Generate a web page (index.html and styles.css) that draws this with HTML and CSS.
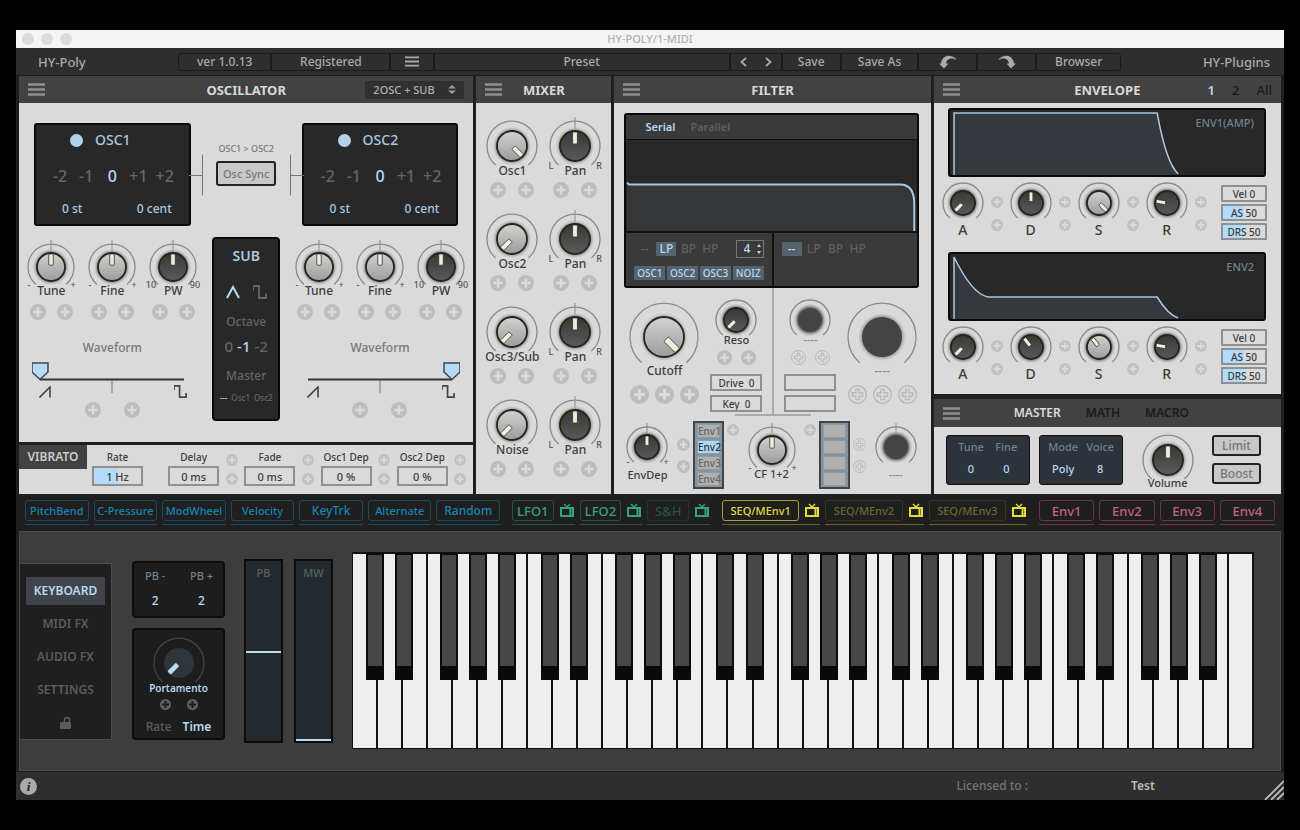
FILE: index.html
```html
<!DOCTYPE html>
<html lang="en">
<head>
    <meta charset="utf-8">
    <title>HY-POLY/1-MIDI</title>
    <link rel="stylesheet" href="styles.css">
</head>
<body>
    <!-- Shared icons -->
    <svg class="sprite" width="0" height="0" aria-hidden="true">
        <defs>
            <linearGradient id="lightKnob" x1="0" y1="0" x2="0" y2="1">
                <stop offset="0" stop-color="#d2d2d2"/><stop offset="1" stop-color="#9c9c9c"/>
            </linearGradient>
            <linearGradient id="darkKnob" x1="0" y1="0" x2="0" y2="1">
                <stop offset="0" stop-color="#383838"/><stop offset="1" stop-color="#5a5a5a"/>
            </linearGradient>
            <radialGradient id="knobShadow">
                <stop offset="0.75" stop-color="#777"/><stop offset="1" stop-color="#dadada" stop-opacity="0"/>
            </radialGradient>
        </defs>
        <symbol id="menu" viewBox="0 0 17 13"><path d="M0 1.5h17M0 6.5h17M0 11.5h17" stroke="currentColor" stroke-width="2.4"/></symbol>
        <symbol id="plus" viewBox="0 0 16 16"><circle cx="8" cy="8" r="8" fill="#bdbdbd"/><path d="M8 3.5v9M3.5 8h9" stroke="#dcdcdc" stroke-width="2.4"/></symbol>
        <symbol id="plus-off" viewBox="0 0 20 20"><circle cx="10" cy="10" r="9.3" fill="none" stroke="#b4b4b4" stroke-width="1.2"/><path d="M8.3 4.5h3.4v3.8h3.8v3.4h-3.8v3.8H8.3v-3.8H4.5V8.3h3.8z" fill="none" stroke="#b4b4b4" stroke-width="1.2"/></symbol>
        <symbol id="plus-dark" viewBox="0 0 16 16"><circle cx="8" cy="8" r="8" fill="#5c6166"/><path d="M8 3v10M3 8h10" stroke="#1d1d1d" stroke-width="3"/></symbol>
        <symbol id="tv" viewBox="0 0 16 15"><path d="M2 5h12v8H2z" fill="none" stroke="currentColor" stroke-width="2"/><path d="M11.5 5v8" stroke="currentColor" stroke-width="2"/><path d="M5 1l3 3 3-3" fill="none" stroke="currentColor" stroke-width="1.4"/></symbol>
        <symbol id="saw" viewBox="0 0 12 12"><path d="M.5 11.5L11 1v10.5" fill="none" stroke="currentColor" stroke-width="1.6"/></symbol>
        <symbol id="square" viewBox="0 0 14 14"><path d="M0 5.5V1h6v12h7V8.5" fill="none" stroke="currentColor" stroke-width="1.8"/></symbol>
    </svg>

    <main class="window">
        <div class="titlebar">
            <span class="dots"><i></i><i></i><i></i></span>
            <span class="window-title">HY-POLY/1-MIDI</span>
        </div>

        <header class="topbar">
            <span class="brand">HY-Poly</span>
            <div class="toolbar">
                <span class="tool version">ver 1.0.13</span>
                <button class="tool registered">Registered</button>
                <button class="tool menu-cell" aria-label="Menu"><svg width="14" height="11"><use href="#menu"/></svg></button>
                <button class="tool preset">Preset</button>
                <span class="tool arrows">
                    <button aria-label="Previous preset"><svg width="7" height="10" viewBox="0 0 7 10"><path d="M6 1L1.5 5 6 9" fill="none" stroke="currentColor" stroke-width="1.8"/></svg></button>
                    <button aria-label="Next preset"><svg width="7" height="10" viewBox="0 0 7 10"><path d="M1 1l4.500 4L1 9" fill="none" stroke="currentColor" stroke-width="1.8"/></svg></button>
                </span>
                <button class="tool save">Save</button>
                <button class="tool save-as">Save As</button>
                <button class="tool history" aria-label="Undo"><svg width="18" height="14" viewBox="0 0 18 14"><path d="M0 8.500h2C2.500 3 7 0 11 1c3.500.5 5.500 2 6.500 4C14 2.500 8 2.500 7 8.500h2.500L5 13.500z" fill="currentColor"/></svg></button>
                <button class="tool history" aria-label="Redo"><svg width="18" height="14" viewBox="0 0 18 14"><path d="M18 8.500h-2C15.500 3 11 0 7 1 3.500 1.500 1.500 3 .5 5 4 2.500 10 2.500 11 8.500H8.500l4.500 5z" fill="currentColor"/></svg></button>
                <button class="tool browser">Browser</button>
            </div>
            <span class="brand">HY-Plugins</span>
        </header>

        <div class="panels">
            <!-- Oscillator -->
            <section class="column">
                <div class="panel-header">
                    <button class="burger" aria-label="Oscillator menu"><svg width="17" height="13"><use href="#menu"/></svg></button>
                    <h2>OSCILLATOR</h2>
                    <span class="select-box">
                        <select aria-label="Oscillator mode"><option>2OSC + SUB</option></select>
                        <svg width="8" height="9" viewBox="0 0 8 9"><path d="M0 3.500L4 0l4 3.500zM0 5.500h8L4 9z" fill="#999"/></svg>
                    </span>
                </div>
                <div class="panel-body osc-body">
                    <div class="osc" data-osc="OSC1" data-pos="0"></div>
                    <div class="osc-middle">
                        <span class="sync-label">OSC1 &gt; OSC2</span>
                        <button class="sync">Osc Sync</button>
                        <div class="sub">
                            <strong>SUB</strong>
                            <div class="sub-waves">
                                <button class="lit" aria-label="Triangle"><svg width="14" height="14" viewBox="0 0 14 14"><path d="M1 13L7 2l6 11" fill="none" stroke="currentColor" stroke-width="2"/></svg></button>
                                <button aria-label="Square"><svg width="14" height="14"><use href="#square"/></svg></button>
                            </div>
                            <span>Octave</span>
                            <div class="sub-octave"><button>0</button><button class="lit">-1</button><button>-2</button></div>
                            <span>Master</span>
                            <div class="sub-master"><button class="lit">---</button><button>Osc1</button><button>Osc2</button></div>
                        </div>
                    </div>
                    <div class="osc right" data-osc="OSC2" data-pos="100"></div>
                </div>
                <div class="panel-body vibrato">
                    <h3>VIBRATO</h3>
                    <div class="vib-fields">
                        <div class="field"><label for="vRate">Rate</label><input id="vRate" class="half" value="1 Hz"></div>
                        <div class="field"><label for="vDelay">Delay</label><input id="vDelay" value="0 ms"></div>
                        <div class="slots stacked" data-count="2" data-size="12"></div>
                        <div class="field"><label for="vFade">Fade</label><input id="vFade" value="0 ms"></div>
                        <div class="slots stacked" data-count="2" data-size="12"></div>
                        <div class="field"><label for="vOsc1">Osc1 Dep</label><input id="vOsc1" value="0 %"></div>
                        <div class="slots stacked" data-count="2" data-size="12"></div>
                        <div class="field"><label for="vOsc2">Osc2 Dep</label><input id="vOsc2" value="0 %"></div>
                        <div class="slots stacked" data-count="2" data-size="12"></div>
                    </div>
                </div>
            </section>

            <!-- Mixer -->
            <section class="column">
                <div class="panel-header">
                    <button class="burger" aria-label="Mixer menu"><svg width="17" height="13"><use href="#menu"/></svg></button>
                    <h2>MIXER</h2>
                </div>
                <div class="panel-body mixer" id="mixer"></div>
            </section>

            <!-- Filter -->
            <section class="column">
                <div class="panel-header">
                    <button class="burger" aria-label="Filter menu"><svg width="17" height="13"><use href="#menu"/></svg></button>
                    <h2>FILTER</h2>
                </div>
                <div class="panel-body filter">
                    <div class="screen filter-screen">
                        <div class="routing"><button class="lit">Serial</button><button>Parallel</button></div>
                        <svg class="curve" height="94" viewBox="0 0 290 94" preserveAspectRatio="none">
                            <path d="M1 44l2 2H274Q288 46 288 66V94H1z" fill="#343638"/>
                            <path d="M1 44l2 2H274Q288 46 288 66V94" fill="none" stroke="#a9c8e2" stroke-width="2"/>
                        </svg>
                        <div class="filter-types">
                            <div class="types-half">
                                <div class="types">
                                    <button>--</button><button class="on">LP</button><button>BP</button><button>HP</button>
                                    <span class="poles">
                                        <select aria-label="Poles"><option>4</option></select>
                                        <svg width="4" height="10" viewBox="0 0 4 10"><path d="M0 3l2-3 2 3zM0 7h4l-2 3z" fill="#b8d9f2"/></svg>
                                    </span>
                                </div>
                                <div class="sources"><button class="on">OSC1</button><button class="on">OSC2</button><button class="on">OSC3</button><button class="on">NOIZ</button></div>
                            </div>
                            <div class="types-half">
                                <div class="types"><button class="on">--</button><button>LP</button><button>BP</button><button>HP</button></div>
                            </div>
                        </div>
                    </div>
                    <div class="filter-main">
                        <div class="cutoff">
                            <div class="knob" data-name="Cutoff" data-size="xl" data-value="100" data-tone="light"></div>
                            <div class="slots" data-count="3" data-size="19"></div>
                        </div>
                        <div class="reso">
                            <div class="knob" data-name="Reso" data-size="s" data-value="0" data-tone="dark"></div>
                            <div class="slots" data-count="2" data-size="15"></div>
                            <input class="box" aria-label="Drive" value="Drive  0">
                            <input class="box" aria-label="Key" value="Key  0">
                        </div>
                        <div class="stem"></div>
                        <div class="reso">
                            <div class="knob off" data-name="----" data-size="s" data-tone="off"></div>
                            <div class="slots" data-count="2" data-size="15" data-icon="plus-off"></div>
                            <input class="box" aria-label="Drive 2" disabled>
                            <input class="box" aria-label="Key 2" disabled>
                        </div>
                        <div class="cutoff">
                            <div class="knob off" data-name="----" data-size="xl" data-tone="off"></div>
                            <div class="slots" data-count="3" data-size="19" data-icon="plus-off"></div>
                        </div>
                    </div>
                    <div class="filter-env">
                        <div class="knob low" data-name="EnvDep" data-size="s" data-value="50" data-tone="dark" data-tick="1" data-marks="-,+"></div>
                        <div class="slots stacked mid" data-count="2" data-size="13"></div>
                        <div class="env-list"><button>Env1</button><button class="on">Env2</button><button>Env3</button><button>Env4</button></div>
                        <div class="slots high" data-count="1" data-size="12"></div>
                        <div class="knob" data-name="CF 1+2" data-size="m" data-value="50" data-tone="light" data-tick="1" data-marks="-,+"></div>
                        <div class="slots high" data-count="1" data-size="12"></div>
                        <div class="env-list empty"><button disabled aria-label="Env1"></button><button disabled aria-label="Env2"></button><button disabled aria-label="Env3"></button><button disabled aria-label="Env4"></button></div>
                        <div class="slots stacked mid" data-count="2" data-size="13" data-icon="plus-off"></div>
                        <div class="knob low off" data-name="----" data-size="s" data-tone="off" data-tick="1"></div>
                    </div>
                </div>
            </section>

            <!-- Envelope and master -->
            <section class="column">
                <div class="panel-header">
                    <button class="burger" aria-label="Envelope menu"><svg width="17" height="13"><use href="#menu"/></svg></button>
                    <h2>ENVELOPE</h2>
                    <div class="env-tabs"><button class="lit">1</button><button>2</button><button>All</button></div>
                </div>
                <div class="panel-body envelope">
                    <div class="screen env-screen">
                        <svg height="65" viewBox="0 0 314 65" preserveAspectRatio="none">
                            <path d="M4 65V3H207Q216 53 228 65z" fill="#35383d"/>
                            <path d="M4 65V3H207Q216 53 228 64" fill="none" stroke="#a9c8e2" stroke-width="1.500"/>
                        </svg>
                        <span>ENV1(AMP)</span>
                    </div>
                    <div class="adsr" data-values="0,50,100,20"></div>
                    <div class="screen env-screen">
                        <svg height="65" viewBox="0 0 314 65" preserveAspectRatio="none">
                            <path d="M4 65V3Q22 40 38 43H207Q218 61 228 65z" fill="#35383d"/>
                            <path d="M4 65V3Q22 40 38 43H207Q218 61 228 64" fill="none" stroke="#a9c8e2" stroke-width="1.500"/>
                        </svg>
                        <span>ENV2</span>
                    </div>
                    <div class="adsr" data-values="0,36,36,20"></div>
                </div>
                <div class="panel-header master-header">
                    <button class="burger" aria-label="Master menu"><svg width="17" height="13"><use href="#menu"/></svg></button>
                    <div class="master-tabs"><button class="active">MASTER</button><button>MATH</button><button>MACRO</button></div>
                </div>
                <div class="panel-body master">
                    <dl class="readout"><div><dt>Tune</dt><dd>0</dd></div><div><dt>Fine</dt><dd>0</dd></div></dl>
                    <dl class="readout"><div><dt>Mode</dt><dd>Poly</dd></div><div><dt>Voice</dt><dd>8</dd></div></dl>
                    <div class="knob volume" data-name="Volume" data-size="l" data-value="50" data-tone="dark"></div>
                    <div class="master-buttons"><button>Limit</button><button>Boost</button></div>
                </div>
            </section>
        </div>

        <!-- Modulation sources -->
        <div class="modbar">
            <div class="mods blue">
                <div class="mod"><button>PitchBend</button></div>
                <div class="mod"><button>C-Pressure</button></div>
                <div class="mod"><button>ModWheel</button></div>
                <div class="mod"><button>Velocity</button></div>
                <div class="mod"><button class="roomy">KeyTrk</button></div>
                <div class="mod"><button>Alternate</button></div>
                <div class="mod"><button class="roomy">Random</button></div>
            </div>
            <div class="mods green">
                <div class="mod"><button>LFO1</button><svg width="16" height="15"><use href="#tv"/></svg></div>
                <div class="mod"><button>LFO2</button><svg width="16" height="15"><use href="#tv"/></svg></div>
                <div class="mod"><button class="faded">S&amp;H</button><svg width="16" height="15"><use href="#tv"/></svg></div>
            </div>
            <div class="mods yellow">
                <div class="mod"><button class="selected">SEQ/MEnv1</button><svg width="16" height="15"><use href="#tv"/></svg></div>
                <div class="mod"><button class="faded">SEQ/MEnv2</button><svg width="16" height="15"><use href="#tv"/></svg></div>
                <div class="mod"><button class="faded">SEQ/MEnv3</button><svg width="16" height="15"><use href="#tv"/></svg></div>
            </div>
            <div class="mods pink">
                <div class="mod"><button>Env1</button></div>
                <div class="mod"><button>Env2</button></div>
                <div class="mod"><button>Env3</button></div>
                <div class="mod"><button>Env4</button></div>
            </div>
        </div>

        <!-- Keyboard page -->
        <section class="bottom">
            <nav class="pages">
                <button class="active">KEYBOARD</button>
                <button>MIDI FX</button>
                <button>AUDIO FX</button>
                <button>SETTINGS</button>
                <button aria-label="Lock"><svg width="11" height="14" viewBox="0 0 11 14"><path d="M4.500 7V4a2.500 2.500 0 0 1 5 0v2" fill="none" stroke="currentColor" stroke-width="1.500"/><rect y="6" width="11" height="7" rx="1" fill="currentColor"/></svg></button>
            </nav>
            <div class="side">
                <dl class="dark-box bend"><div><dt>PB -</dt><dd>2</dd></div><div><dt>PB +</dt><dd>2</dd></div></dl>
                <div class="dark-box porta">
                    <div class="knob" data-name="Portamento" data-size="l" data-value="0" data-tone="night"></div>
                    <div class="slots" data-count="2" data-size="11" data-icon="plus-dark"></div>
                    <div class="porta-mode"><button>Rate</button><button class="lit">Time</button></div>
                </div>
            </div>
            <div class="wheels">
                <div class="wheel"><span>PB</span><i class="centre"></i></div>
                <div class="wheel"><span>MW</span><i></i></div>
            </div>
            <div class="keys" id="keys"></div>
        </section>

        <footer class="footer">
            <button class="info" aria-label="About">i</button>
            <span class="licensed">Licensed to :</span>
            <strong>Test</strong>
            <svg class="grip" width="20" height="20" viewBox="0 0 20 20"><path d="M1 20L20 1M7 20L20 7M13 20l7-7" stroke="#bbb" stroke-width="1.800"/></svg>
        </footer>
    </main>

    <script src="script.js"></script>
</body>
</html>
```
FILE: styles.css
```css
* {
    box-sizing: border-box;
}

body {
    margin: 0;
    padding: 30px 16px;
    background: #000;
    font-family: "Noto Sans", "Open Sans", sans-serif;
    font-size: 12px;
    font-weight: 500;
    line-height: 16px;
    color: #3c3c3c;
}

button, input, select {
    margin: 0;
    padding: 0;
    border: 0;
    background: none;
    color: inherit;
    font: inherit;
}

h2, h3, dl, dd {
    margin: 0;
}

svg {
    display: block;
}

.sprite {
    position: absolute;
}

.window {
    background: #1f1f1f;
}

/* Title bar and toolbar */

.titlebar {
    display: grid;
    grid-template-columns: 1fr auto 1fr;
    align-items: center;
    height: 18px;
    padding: 0 6px;
    background: #f5f5f5;
}

.dots {
    display: flex;
    gap: 7px;
}

.dots i {
    width: 12px;
    height: 12px;
    border-radius: 50%;
    background: #dcdcdc;
}

.window-title {
    font-size: 11px;
    color: #b0b0b0;
}

.topbar {
    display: flex;
    align-items: center;
    justify-content: space-between;
    height: 27px;
    padding: 0 14px 0 22px;
    background: #2e2e2e;
    color: #aaa;
}

.brand {
    width: 70px;
    font-size: 13px;
}

.brand:last-child {
    text-align: right;
}

.toolbar {
    display: flex;
    flex: 1;
    height: 18px;
    margin: 0 79px 0 70px;
    border: 1px solid #1b1b1b;
    border-radius: 3px;
}

.tool {
    display: flex;
    flex: 58 1 0;
    align-items: center;
    justify-content: center;
    white-space: nowrap;
}

.tool + .tool {
    border-left: 2px solid #1b1b1b;
}

.tool.version { flex-grow: 93; }
.tool.registered { flex-grow: 119; }
.tool.menu-cell { flex-grow: 42; }
.tool.preset { flex-grow: 299; }
.tool.save-as { flex-grow: 77; }
.tool.browser { flex-grow: 84; }

.arrows {
    gap: 18px;
    flex-grow: 51;
}

/* Panels */

.panels {
    display: grid;
    grid-template-columns: 454fr 135fr 316fr 347fr;
    grid-auto-rows: minmax(418px, auto);
    gap: 3px;
    padding: 1px 3px 0;
}

.column {
    display: flex;
    flex-direction: column;
    min-width: 0;
}

.panel-header {
    display: grid;
    grid-template-columns: 1fr auto 1fr;
    align-items: center;
    height: 27px;
    padding: 0 9px;
    background: #424242;
}

.panel-header h2 {
    font-size: 13px;
    font-weight: 700;
    color: #d8d8d8;
}

.burger {
    justify-self: start;
    color: #909090;
}

.panel-body {
    background: #dadada;
}

.select-box {
    display: flex;
    align-items: center;
    justify-self: end;
    width: 99px;
    height: 18px;
    padding: 0 8px;
    background: #303030;
    color: #b0b0b0;
    font-size: 11px;
}

.select-box select,
.poles select {
    flex: 1;
    min-width: 0;
    appearance: none;
}

.screen {
    border: 2px solid #0a0a0a;
    border-radius: 3px;
    background: #282828;
}

.lit {
    color: #b8d9f2;
}

/* Knobs and modulation slots */

.knob {
    position: relative;
    display: flex;
    flex-direction: column;
    align-items: center;
    white-space: nowrap;
}

.knob svg {
    overflow: visible;
}

.knob svg text {
    font-size: 9px;
    fill: #555;
    text-anchor: middle;
}

.knob input {
    position: absolute;
    inset: 0;
    width: 100%;
    opacity: 0;
}

.off {
    color: #888;
}

.slots {
    display: flex;
    justify-content: center;
    gap: 11px;
}

.stacked {
    flex-direction: column;
    justify-content: flex-start;
    align-items: center;
    gap: 9px;
}

/* Oscillator */

.osc-body {
    display: grid;
    grid-template-columns: 187fr 81fr 187fr;
    height: 339px;
    margin-bottom: 3px;
}

.osc {
    padding-top: 20px;
}

.osc-screen {
    position: relative;
    display: flex;
    flex-direction: column;
    justify-content: space-between;
    height: 103px;
    margin: 0 15px 12px;
    padding: 5px 11px 7px;
    color: #a9c8e2;
}

/* Bracket pointing to the sync button */
.osc-screen::before,
.osc-screen::after {
    content: "";
    position: absolute;
    left: 100%;
    top: 50%;
    width: 13px;
    height: 1px;
    background: #777;
}

.osc-screen::after {
    width: 1px;
    height: 41px;
    margin-left: 13px;
    transform: translateY(-50%);
}

.right .osc-screen::before,
.right .osc-screen::after {
    left: auto;
    right: 100%;
}

.right .osc-screen::after {
    margin-right: 13px;
}

.osc-name {
    display: flex;
    align-items: center;
    gap: 12px;
    margin-left: 23px;
    font-size: 14px;
    line-height: 20px;
}

.osc-name i {
    width: 13px;
    height: 13px;
    border-radius: 50%;
    background: #b4d0ea;
}

.osc-octave {
    display: grid;
    grid-template-columns: repeat(5, 1fr);
    font-size: 16px;
    line-height: 20px;
    color: #666;
}

.osc-octave .lit,
.sub .lit {
    color: #b8d9f2;
}

.osc-values {
    display: flex;
    justify-content: space-between;
    padding: 0 6px 0 15px;
}

.osc-knobs {
    display: grid;
    grid-template-columns: repeat(3, 61px);
    justify-content: center;
}

.osc-knobs .slots {
    margin-top: 5px;
}

.waveform-label {
    display: block;
    margin: 20px 0 6px;
    text-align: center;
    color: #777;
}

.wave-slider {
    position: relative;
    width: 160px;
    margin: 0 auto;
}

.wave-slider input {
    position: absolute;
    inset: 0;
    width: 100%;
    opacity: 0;
}

.wave-slots {
    gap: 23px;
}

.osc-middle {
    display: flex;
    flex-direction: column;
    align-items: center;
    padding-top: 38px;
}

.sync-label {
    font-size: 9px;
    color: #777;
    white-space: nowrap;
}

.sync {
    width: 60px;
    height: 25px;
    margin: 4px 0 51px;
    border: 2px solid #222;
    border-radius: 3px;
    background: #c8c8c8;
    color: #777;
    font-size: 11px;
    white-space: nowrap;
}

.sub {
    display: flex;
    flex-direction: column;
    align-items: center;
    width: 68px;
    height: 184px;
    padding: 9px 2px;
    border: 2px solid #0a0a0a;
    border-radius: 4px;
    background: #282828;
    color: #666;
}

.sub strong {
    margin-bottom: 21px;
    font-size: 14px;
    font-weight: 600;
    color: #a9c8e2;
}

.sub-waves {
    display: flex;
    gap: 13px;
    margin-bottom: 15px;
}

.sub-octave {
    display: flex;
    gap: 4px;
    margin: 8px 0 14px;
    font-size: 15px;
}

.sub-master {
    display: flex;
    gap: 4px;
    margin-top: 6px;
    font-size: 8px;
    white-space: nowrap;
}

/* Value boxes */

.vibrato {
    display: flex;
    flex: 1;
    align-items: flex-start;
    gap: 5px;
    padding-right: 6px;
}

.vibrato h3 {
    width: 68px;
    background: #424242;
    color: #ccc;
    font-size: 12px;
    font-weight: 600;
    line-height: 24px;
    text-align: center;
}

.vib-fields {
    display: grid;
    flex: 1;
    grid-template-columns: repeat(5, 51px 14px);
    justify-content: space-between;
    padding-top: 4px;
}

.vib-fields .stacked {
    gap: 7px;
    padding-top: 5px;
}

.field:first-child {
    grid-column: span 2;
    width: 51px;
}

.field label {
    display: block;
    margin: 0 -5px 1px;
    text-align: center;
    white-space: nowrap;
    font-size: 10px;
}

.field input,
.box {
    width: 100%;
    height: 20px;
    border: 2px solid #909090;
    text-align: center;
    font-size: 11px;
}

.box {
    height: 17px;
    white-space: pre;
    font-size: 10px;
}

.half {
    background: linear-gradient(90deg, #b4dcfa 50%, #dadada 50%);
}

/* Mixer */

.mixer {
    display: grid;
    flex: 1;
    grid-template-columns: 63px 63px;
    grid-auto-rows: 83px;
    justify-content: center;
    row-gap: 10px;
    padding-top: 12px;
}

.mixer .slots {
    gap: 12px;
    margin-top: 3px;
}

/* Filter */

.filter {
    flex: 1;
    padding: 10px 12px 0 10px;
}

.filter-screen {
    background: #3a3a3a;
    color: #606060;
}

.routing {
    display: flex;
    align-items: center;
    gap: 15px;
    height: 24px;
    padding-left: 19px;
    font-size: 11px;
    font-weight: 600;
}

.curve {
    width: 100%;
    background: #282828;
    border-top: 1px solid #111;
    border-bottom: 2px solid #111;
}

.filter-types {
    display: grid;
    grid-template-columns: 1fr 1fr;
    height: 53px;
}

.types-half {
    padding: 7px 8px 0;
}

.types-half + .types-half {
    border-left: 2px solid #111;
}

.types,
.sources {
    display: flex;
    align-items: center;
    gap: 2px;
}

.types {
    height: 18px;
}

.types button {
    width: 20px;
}

.sources {
    margin-top: 8px;
}

.sources button {
    flex: 1;
    font-size: 10px;
    line-height: 14px;
}

.filter .on {
    background: #56626d;
    color: #b8d9f2;
}

.types .on {
    line-height: 14px;
}

.poles {
    display: flex;
    align-items: center;
    width: 28px;
    height: 18px;
    margin-left: auto;
    padding: 0 2px 0 7px;
    border: 1px solid #777;
    color: #b8d9f2;
}

.filter-main {
    display: grid;
    grid-template-columns: 78fr 64fr 10fr 64fr 78fr;
    height: 128px;
}

.cutoff {
    padding-top: 9px;
}

.cutoff .slots {
    gap: 6px;
    margin-top: 6px;
}

.reso {
    padding: 6px 6px 0;
    font-size: 11px;
}

.reso .slots {
    gap: 9px;
    margin: 2px 0 9px;
}

.reso .box {
    display: block;
    margin-bottom: 4px;
}

.stem {
    justify-self: center;
    width: 76px;
    margin: 0 -33px;
    border-bottom: 2px solid #aaa;
    background: linear-gradient(#aaa, #aaa) center / 2px 100% no-repeat;
}

.filter-env {
    display: flex;
    justify-content: space-between;
    align-items: flex-start;
    margin: 0 -3px;
    padding-top: 5px;
    font-size: 11px;
}

.low .knob-label {
    margin-top: 8px;
}

.mid {
    padding-top: 17px;
}

.high {
    padding-top: 3px;
}

.env-list {
    display: flex;
    flex-direction: column;
    gap: 2px;
    width: 31px;
    padding: 1px 2px;
    border: 2px solid #444;
    background: #8395a3;
    color: #666;
    font-size: 10px;
}

.env-list button {
    height: 14px;
    border: 1px solid #8f9ba5;
    background: #b0b0b0;
    line-height: 12px;
}

.filter .env-list .on {
    background: #a9d8fb;
    color: #333;
}

/* Envelope */

.env-tabs {
    display: flex;
    justify-self: end;
    gap: 17px;
    color: #1b1b1b;
    font-size: 13px;
}

.env-tabs .lit {
    color: #b8d9f2;
    font-weight: 600;
}

.envelope {
    height: 291px;
    margin-bottom: 5px;
    padding-top: 5px;
}

.env-screen {
    position: relative;
    height: 69px;
    margin: 0 15px 0 14px;
}

.env-screen svg {
    width: 100%;
}

.env-screen span {
    position: absolute;
    top: 5px;
    right: 10px;
    color: #71818f;
    font-size: 11px;
}

.adsr {
    display: flex;
    gap: 2px;
    height: 75px;
    padding: 0 14px 0 3px;
}

.adsr .knob {
    width: 52px;
}

.adsr .knob-label {
    margin-top: 7px;
    font-size: 14px;
}

.adsr .stacked {
    gap: 11px;
    padding-top: 19px;
}

.adsr .slots,
.vibrato .slots,
.high {
    opacity: 0.8;
}

.amounts {
    display: flex;
    flex-direction: column;
    gap: 2px;
    width: 46px;
    margin-left: auto;
    padding-top: 8px;
}

.master-header {
    height: 28px;
    grid-template-columns: auto 1fr;
}

.master-tabs {
    display: flex;
    gap: 25px;
    margin-left: 54px;
    color: #1b1b1b;
    font-weight: 600;
}

.master-tabs .active {
    color: #ddd;
}

.master {
    display: flex;
    flex: 1;
    justify-content: space-between;
    padding: 8px 20px 0 12px;
}

.readout {
    display: flex;
    justify-content: space-evenly;
    width: 84px;
    height: 50px;
    padding-top: 3px;
    border: 1px solid #111;
    border-radius: 3px;
    background: #2c333a;
    text-align: center;
    font-size: 11px;
}

.readout dt {
    color: #71818f;
}

.readout dd {
    margin-top: 6px;
    color: #b8d9f2;
}

.readout + .readout {
    margin-left: -4px;
}

.volume {
    margin-top: -6px;
    font-size: 11px;
}

.volume .knob-label {
    margin-top: -2px;
}

.master-buttons {
    display: flex;
    flex-direction: column;
    gap: 7px;
}

.master-buttons button {
    width: 49px;
    height: 21px;
    border: 2px solid #222;
    border-radius: 3px;
    background: #c8c8c8;
    color: #777;
    line-height: 16px;
}

/* Modulation bar */

.modbar {
    display: flex;
    gap: 12px;
    padding: 6px 9px 5px;
}

.mods {
    display: flex;
    gap: 5px;
}

.mod {
    display: flex;
    flex: 1 1 0;
    align-items: center;
    gap: 5px;
    min-width: 0;
    padding-bottom: 3px;
    border-bottom: 1px solid;
}

.mod button {
    display: flex;
    flex: 1;
    align-items: center;
    justify-content: center;
    min-width: 0;
    height: 21px;
    border: 1px solid;
    border-radius: 3px;
    font-size: 11px;
}

.blue { flex: 475 1 0; }
.green { flex: 198 1 0; }
.yellow { flex: 305 1 0; }
.pink { flex: 236 1 0; }

.blue .mod, .blue button { border-color: #184a62; color: #1583b5; }
.green .mod, .green button { border-color: #26543f; color: #34a577; }
.yellow .mod, .yellow button { border-color: #68622b; color: #e6dc3e; }
.pink .mod, .pink button { border-color: #6d334a; color: #c4608b; }

.blue .roomy {
    font-size: 12px;
}

.green .mod button,
.pink .mod button {
    font-size: 13px;
}

.yellow .selected {
    border-color: #a79f38;
}

.green .faded {
    border-color: #20352b;
    color: #265541;
}

.yellow .faded {
    border-color: #38351f;
    color: #6d672c;
}

/* Keyboard page */

.bottom {
    display: flex;
    align-items: flex-start;
    height: 240px;
    margin: 1px 3px 0;
    padding-right: 26px;
    border: 1px solid #4b4b4b;
    background: #3d3d3d;
}

.pages {
    display: flex;
    flex-direction: column;
    gap: 5px;
    width: 92px;
    margin: 31px 20px 0 0;
    padding: 13px 6px 2px;
    border: solid #4b4b4b;
    border-width: 1px 1px 1px 0;
    background: #1f1f1f;
    color: #5c5c5c;
    font-weight: 600;
}

.pages button {
    display: flex;
    align-items: center;
    justify-content: center;
    height: 28px;
}

.pages .active {
    background: #40454c;
    color: #b8d9f2;
}

.side {
    display: flex;
    flex-direction: column;
    gap: 10px;
    width: 93px;
    margin-top: 29px;
}

.dark-box {
    border: 2px solid #0c0c0c;
    border-radius: 4px;
    background: #1d1d1d;
    text-align: center;
}

.bend {
    display: flex;
    justify-content: space-between;
    height: 57px;
    padding: 5px 10px 0 11px;
    color: #71818f;
    font-size: 11px;
}

.bend dd {
    margin-top: 9px;
    color: #b8d9f2;
    font-size: 12px;
}

.porta {
    height: 112px;
    padding-top: 2px;
    color: #b8d9f2;
}

.porta .knob {
    font-size: 10px;
    font-weight: 600;
}

.porta .slots {
    gap: 16px;
    margin: 3px 0 9px;
}

.porta-mode {
    display: flex;
    justify-content: center;
    gap: 11px;
    color: #5c5c5c;
}

.porta-mode .lit {
    color: #b8d9f2;
    font-weight: 600;
}

.wheels {
    display: flex;
    gap: 11px;
    margin: 27px 19px 0;
}

.wheel {
    display: flex;
    flex-direction: column;
    justify-content: space-between;
    width: 39px;
    height: 184px;
    border: 2px solid #0c0c0c;
    background: #24292e;
    color: #56616b;
    font-size: 11px;
    line-height: 24px;
    text-align: center;
}

.wheel i {
    height: 2px;
    background: #b8dcf2;
}

.wheel .centre {
    margin-bottom: 88px;
}

.keys {
    display: flex;
    flex: 1;
    height: 197px;
    margin-top: 20px;
    padding: 2px 0 1px 1px;
    background: #111;
}

.slot {
    position: relative;
    flex: 1;
}

.white {
    display: block;
    width: 100%;
    height: 100%;
    border-right: 2px solid #111;
    background: #eee;
}

.black {
    position: absolute;
    z-index: 1;
    top: -1px;
    width: 18px;
    height: 127px;
    border: 2px solid #0a0a0a;
    border-bottom-width: 14px;
    background: #474747;
}

/* Black keys lean to either side of the gap between two whites */
.black-c { right: -6px; }
.black-d { right: -10px; }
.black-f { right: -5px; }
.black-g { right: -9px; }
.black-a { right: -13px; }

.footer {
    display: flex;
    align-items: center;
    height: 28px;
    margin-top: 1px;
    padding-left: 4px;
    background: #2e2e2e;
    color: #777;
}

.footer strong {
    width: 230px;
    color: #bbb;
    font-weight: 600;
    text-align: center;
}

.info {
    width: 17px;
    height: 17px;
    border-radius: 50%;
    background: #aaa;
    color: #222;
    font: italic bold 13px/17px "Liberation Serif", serif;
}

.licensed {
    margin-left: auto;
}

.grip {
    align-self: flex-end;
    margin-left: 6px;
}
```
FILE: script.js
```js
// r: scale ring radius, k: cap radius, b: room below the centre
const KNOBS = {
    s: { r: 20, k: 12, b: 12 },
    m: { r: 23, k: 14, b: 16 },
    l: { r: 25, k: 15, b: 17 },
    xl: { r: 34, k: 20, b: 26 }
};

function point(r, deg) {
    const a = deg * Math.PI / 180;
    return `${(r * Math.sin(a)).toFixed(1)} ${(-r * Math.cos(a)).toFixed(1)}`;
}

function knobSvg(d) {
    const { r, k, b } = KNOBS[d.size];
    const half = r + 6;
    const angle = -135 + 270 * (d.value || 0) / 100;
    const night = d.tone === 'night';
    const fill = { light: 'url(#lightKnob)', dark: 'url(#darkKnob)', off: '#444', night: '#30353b' }[d.tone];
    const marks = d.marks ? d.marks.split(',') : [];
    const w = (k * 0.32).toFixed(1);
    return `<svg width="${half * 2}" height="${half + b}" viewBox="${-half} ${-half} ${half * 2} ${half + b}">
        <path d="M${point(r, -139)}A${r} ${r} 0 1 1 ${point(r, 139)}" fill="none" stroke="${night ? '#40454a' : '#8a8a8a'}" stroke-width="1.3"/>
        ${d.tick ? `<path d="M0 ${-r - 4}V${-k}" stroke="#8a8a8a"/>` : ''}
        ${night ? '' : `<circle r="${k + 5}" fill="url(#knobShadow)"/>`}
        <circle r="${k}" fill="${fill}" ${night || d.tone === 'off' ? '' : 'stroke="#25251a" stroke-width="1.8"'}/>
        ${d.tone === 'off' ? '' : `<rect x="${-w / 2}" y="${-k + 1}" width="${w}" height="${k * 0.8}" rx="1" fill="${night ? '#b8dcf2' : '#eeeee0'}" stroke="${night ? 'none' : '#33332a'}" stroke-width="0.8" transform="rotate(${angle})"/>`}
        ${marks.map((m, i) => `<text x="${(i ? 1 : -1) * (r - 1)}" y="${r - 2}">${m}</text>`).join('')}
    </svg>`;
}

function slotButtons(count, size, icon) {
    return Array.from({ length: count }, () =>
        `<button aria-label="Add modulation"><svg width="${size}" height="${size}"><use href="#${icon || 'plus'}"/></svg></button>`).join('');
}

function knob(name, size, value, tone, marks) {
    return `<div class="knob" data-name="${name}" data-size="${size}" data-value="${value}" data-tone="${tone}"
        ${marks ? `data-tick="1" data-marks="${marks}"` : ''}></div>`;
}

// Oscillators
document.querySelectorAll('.osc').forEach(el => {
    const id = el.dataset.osc;
    const x = el.dataset.pos === '0' ? 8 : 152;
    const slots = '<div class="slots" data-count="2" data-size="16"></div>';
    el.innerHTML = `
        <div class="screen osc-screen">
            <div class="osc-name"><i></i>${id}</div>
            <div class="osc-octave"><button>-2</button><button>-1</button><button class="lit">0</button><button>+1</button><button>+2</button></div>
            <div class="osc-values"><span>0 st</span><span>0 cent</span></div>
        </div>
        <div class="osc-knobs">
            <div>${knob('Tune', 'm', 50, 'light', '-,+')}${slots}</div>
            <div>${knob('Fine', 'm', 50, 'light', '-,+')}${slots}</div>
            <div>${knob('PW', 'm', 50, 'dark', '10,90')}${slots}</div>
        </div>
        <label class="waveform-label" for="${id}wave">Waveform</label>
        <div class="wave-slider">
            <svg width="160" height="40" viewBox="0 0 160 40" color="#444">
                <path d="M8 17.500h144" stroke="#333" stroke-width="2"/><path d="M80 18v13" stroke="#777"/>
                <path d="M${x - 8} 1h16v9l-8 7.500-8-7.500z" fill="#b4dcfa" stroke="#444" stroke-width="1.5"/>
                <use href="#saw" x="7" y="24" width="12" height="12"/>
                <use href="#square" x="142" y="23" width="13" height="13"/>
            </svg>
            <input type="range" id="${id}wave" value="${el.dataset.pos}">
        </div>
        <div class="slots wave-slots" data-count="2" data-size="16"></div>`;
});

// Mixer rows
document.getElementById('mixer').innerHTML = [['Osc1', 100], ['Osc2', 0], ['Osc3/Sub', 0], ['Noise', 0]].map(([name, value]) => `
    <div>${knob(name, 'l', value, 'light')}<div class="slots" data-count="2" data-size="16"></div></div>
    <div>${knob('Pan', 'l', 50, 'dark', 'L,R')}<div class="slots" data-count="2" data-size="16"></div></div>`).join('');

// Envelope rows
document.querySelectorAll('.adsr').forEach(el => {
    const values = el.dataset.values.split(',');
    el.innerHTML = ['A', 'D', 'S', 'R'].map((name, i) =>
        knob(name, 's', values[i], name === 'S' ? 'light' : 'dark') +
        '<div class="slots stacked" data-count="2" data-size="12"></div>').join('') + `
        <div class="amounts">
            <input class="box" aria-label="Velocity" value="Vel 0">
            <input class="box half" aria-label="Attack shape" value="AS 50">
            <input class="box half" aria-label="Decay and release shape" value="DRS 50">
        </div>`;
});

document.querySelectorAll('.knob').forEach((el, i) => {
    const d = el.dataset;
    el.innerHTML = `${knobSvg(d)}<label class="knob-label" for="knob${i}">${d.name}</label>
        <input type="range" id="knob${i}" value="${d.value || 0}" ${d.tone === 'off' ? 'disabled' : ''}>`;
});

document.querySelectorAll('.slots').forEach(el => {
    el.innerHTML = slotButtons(+el.dataset.count, el.dataset.size, el.dataset.icon);
});

// 36 white keys, C to C
const notes = ['c', 'd', 'e', 'f', 'g', 'a', 'b'];
document.getElementById('keys').innerHTML = Array.from({ length: 36 }, (_, i) => {
    const note = notes[i % 7];
    const sharp = i < 35 && note !== 'e' && note !== 'b';
    return `<div class="slot"><button class="white" aria-label="${note}"></button>${sharp ? `<button class="black black-${note}" aria-label="${note} sharp"></button>` : ''}</div>`;
}).join('');
```
